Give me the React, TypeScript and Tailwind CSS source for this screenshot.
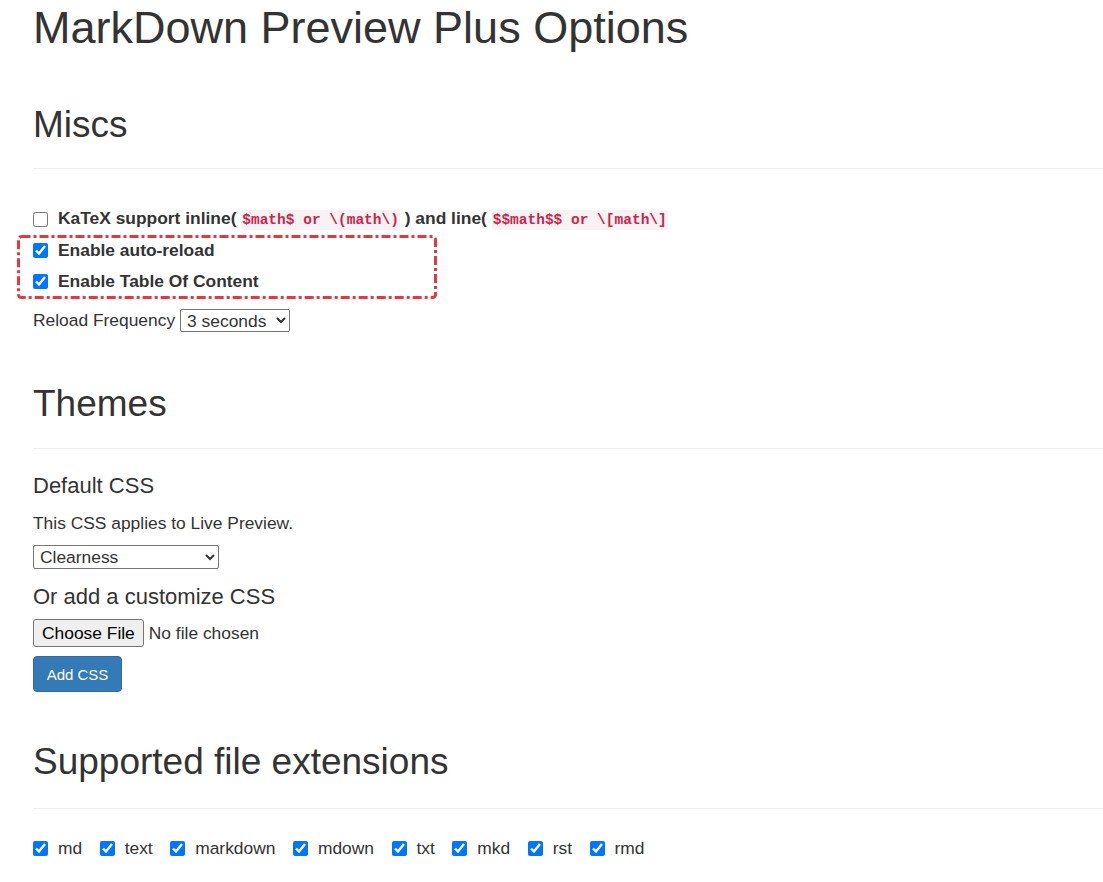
import { useState } from "react";

const exts = ["md", "text", "markdown", "mdown", "txt", "mkd", "rst", "rmd"];

const Code = ({ children }: { children: string }) => (
  <code className="bg-[#f9f2f4] text-[#c7254e] px-[1px] py-[2px] rounded-[4px] font-['Liberation_Mono',monospace] text-[14.5px] font-bold">
    {children}
  </code>
);

const Check = ({ checked }: { checked: boolean }) => {
  const [on, setOn] = useState(checked);
  return (
    <input
      type="checkbox"
      checked={on}
      onChange={() => setOn(!on)}
      className="w-[15px] h-[15px] m-0 accent-[#0075ff] shrink-0"
    />
  );
};

export default function App() {
  const [fileName, setFileName] = useState("");

  return (
    <div className="min-h-screen bg-white text-[#333] font-['Liberation_Sans',Arial,sans-serif] text-[17.4px] leading-[24px] px-[33px]">
      <h1 className="text-[45px] leading-[48px] pt-[4px]">MarkDown Preview Plus Options</h1>

      <h2 className="text-[37px] leading-[40px] mt-[53px]">Miscs</h2>
      <hr className="border-0 border-t border-[#eee] mt-[23px] -mr-[33px]" />

      <div className="mt-[38px] relative">
        <label className="flex items-center gap-[10px] h-[24px] font-bold">
          <Check checked={false} />
          <span>
            KaTeX support inline( <Code>{"$math$ or \\(math\\)"}</Code> ) and line( <Code>{"$$math$$ or \\[math\\]"}</Code>
          </span>
        </label>
        <label className="flex items-center gap-[10px] h-[24px] font-bold mt-[7px]">
          <Check checked={true} />
          <span>Enable auto-reload</span>
        </label>
        <label className="flex items-center gap-[10px] h-[24px] font-bold mt-[7px]">
          <Check checked={true} />
          <span>Enable Table Of Content</span>
        </label>
        {/* annotation box */}
        <svg
          className="absolute left-[-16px] top-[28px] pointer-events-none"
          width="420"
          height="65"
          viewBox="0 0 420 65"
        >
          <rect
            x="1.5"
            y="1.5"
            width="417"
            height="61"
            rx="3"
            fill="none"
            stroke="#e2393f"
            strokeWidth="3"
            strokeDasharray="9 3 3 3"
          />
        </svg>
        <div className="flex items-center gap-[5px] mt-[15px]">
          <span>Reload Frequency</span>
          <select className="h-[23px] w-[110px] border border-[#767676] rounded-[2px] bg-white text-[17.4px] leading-[20px] px-[2px]">
            <option>3 seconds</option>
            <option>1 second</option>
            <option>5 seconds</option>
          </select>
        </div>
      </div>

      <h2 className="text-[37px] leading-[40px] mt-[52px]">Themes</h2>
      <hr className="border-0 border-t border-[#eee] mt-[24px] -mr-[33px]" />

      <h4 className="text-[22px] leading-[26px] mt-[24px]">Default CSS</h4>
      <p className="mt-[12px]">This CSS applies to Live Preview.</p>
      <select className="mt-[10px] h-[24px] w-[186px] border border-[#767676] rounded-[2px] bg-white text-[17.4px] leading-[20px] px-[2px] block">
        <option>Clearness</option>
        <option>Clearness Dark</option>
        <option>Github</option>
      </select>
      <h4 className="text-[22px] leading-[26px] mt-[15px]">Or add a customize CSS</h4>
      <label className="flex items-center gap-[5px] mt-[9px] h-[28px] w-fit cursor-pointer">
        <input
          type="file"
          className="hidden"
          onChange={(e) => setFileName(e.target.files?.[0]?.name ?? "")}
        />
        <span className="h-[28px] px-[8px] flex items-center border border-[#767676] rounded-[3px] bg-[#efefef] text-black">
          Choose File
        </span>
        <span>{fileName || "No file chosen"}</span>
      </label>
      <button className="mt-[9px] h-[36px] w-[89px] pt-[2px] bg-[#337ab7] border border-[#2e6da4] rounded-[4px] text-white text-[15px] block">
        Add CSS
      </button>

      <h2 className="text-[37px] leading-[40px] mt-[50px]">Supported file extensions</h2>
      <hr className="border-0 border-t border-[#eee] mt-[26px] -mr-[33px]" />

      <div className="flex items-center mt-[27px] gap-[17.5px]">
        {exts.map((e) => (
          <label key={e} className="flex items-center gap-[10px] h-[24px]">
            <Check checked={true} />
            <span>{e}</span>
          </label>
        ))}
      </div>
    </div>
  );
}
